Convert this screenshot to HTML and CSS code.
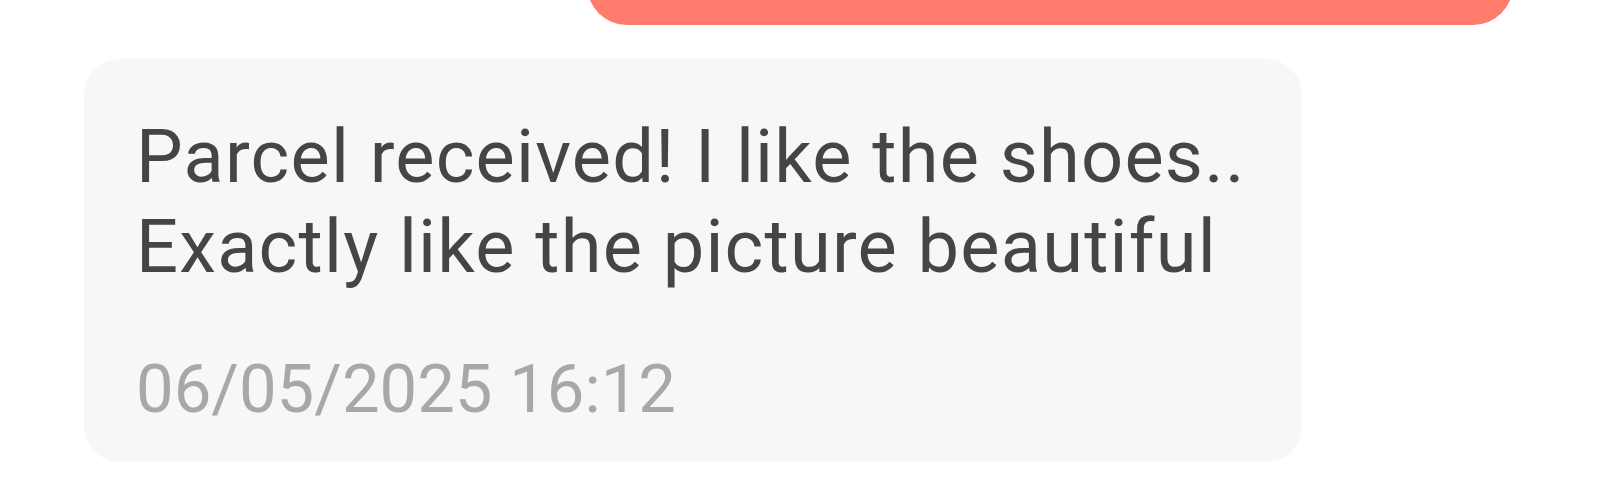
FILE: index.html
```html
<!DOCTYPE html>
<html lang="en">
<head>
    <meta charset="UTF-8">
    <meta name="viewport" content="width=device-width, initial-scale=1.0">
    <title>Chat</title>
    <link rel="stylesheet" href="styles.css">
</head>
<body>
    <div class="chat">
        <div class="message sent"></div>

        <div class="message received">
            <p class="message-text">Parcel received! I like the shoes..<br>Exactly like the picture beautiful</p>
            <span class="message-time">06/05/2025 16:12</span>
        </div>
    </div>
</body>
</html>
```

FILE: styles.css
```css
* {
    margin: 0;
    padding: 0;
    box-sizing: border-box;
    font-family: Roboto, 'Noto Sans', sans-serif;
}

body {
    background: #ffffff;
    overflow: hidden;
}

.chat {
    display: flex;
    flex-direction: column;
    gap: 34px;
}

.message {
    border-radius: 36px;
}

.sent {
    align-self: flex-end;
    width: 926px;
    height: 100px;
    margin-top: -75px;
    margin-right: 87px;
    border-radius: 40px;
    background: #ff7b6b;
}

.received {
    align-self: flex-start;
    width: 1218px;
    margin-left: 84px;
    padding: 53px 52px 34px;
    background: #f7f7f7;
    display: flex;
    flex-direction: column;
}

.message-text {
    color: #454545;
    font-size: 74px;
    line-height: 90px;
    letter-spacing: 1.2px;
}

.message-time {
    margin-top: 58px;
    color: #a8a8a8;
    font-size: 67px;
    line-height: 78px;
}
```
